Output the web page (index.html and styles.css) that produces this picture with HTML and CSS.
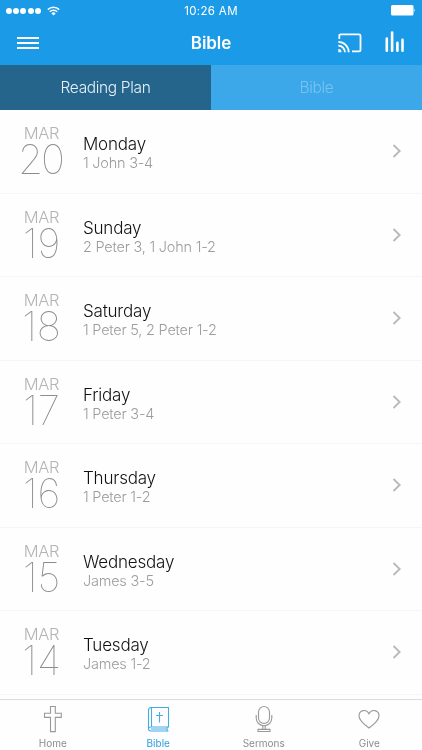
FILE: index.html
```html
<!DOCTYPE html>
<html lang="en">

<head>
  <meta charset="UTF-8">
  <meta name="viewport" content="width=device-width, initial-scale=1.0">
  <title>Bible</title>
  <link rel="stylesheet" href="styles.css">
</head>

<body>
  <div class="app">
    <header class="header">
      <div class="status">
        <div class="signal">
          <i></i><i></i><i></i><i></i><i></i>
          <svg class="wifi" width="13" height="10" viewBox="0 0 13 10">
            <path d="M.8 3.6a8.2 8.2 0 0 1 11.4 0M2.8 5.7a5.3 5.3 0 0 1 7.4 0" fill="none" stroke="#fff" stroke-width="1.5" />
            <path d="M4.4 7.4a3 3 0 0 1 4.2 0L6.5 9.6z" fill="#fff" />
          </svg>
        </div>
        <div class="time">10:26 AM</div>
        <svg class="battery" width="25" height="11" viewBox="0 0 25 11">
          <rect width="22.5" height="10.5" rx="1.5" fill="#fff" />
          <path d="M23.2 3.5q1.5 1.7 0 3.5z" fill="#fff" />
        </svg>
      </div>
      <div class="nav">
        <div class="menu"><span></span><span></span><span></span></div>
        <h1>Bible</h1>
        <div class="actions">
          <svg width="24" height="20" viewBox="0 0 24 20" fill="none" stroke="#fff" stroke-width="1.8">
            <path d="M1.3 6V2.8Q1.3 1.3 2.8 1.3H21Q22.5 1.3 22.5 2.8V16.9Q22.5 18.4 21 18.4H14" />
            <path d="M.3 8.9A10.4 10.4 0 0 1 10.7 19.3M.3 12.6A6.7 6.7 0 0 1 7 19.3" />
            <path d="M.3 16.1A3.2 3.2 0 0 1 3.5 19.3H.3z" fill="#fff" stroke="none" />
          </svg>
          <svg class="bars" width="20" height="22" viewBox="0 0 20 22" fill="none" stroke="#fff" stroke-width="2.6" stroke-linecap="round">
            <path d="M1.8 7.5v12.3M7.1 1.5v18.3M12.4 11.7v8.1M17.5 8.9v10.9" />
          </svg>
        </div>
      </div>
    </header>

    <div class="tabs">
      <div class="tab active">Reading Plan</div>
      <div class="tab">Bible</div>
    </div>

    <ul class="list">
      <li class="item">
        <div class="date"><span class="month">MAR</span><span class="num twenty">20</span></div>
        <div class="text"><h2>Monday</h2><p>1 John 3-4</p></div>
        <svg class="arrow" width="10" height="14" viewBox="0 0 10 14"><path d="M1.5 1l6.2 6-6.2 6" /></svg>
      </li>
      <li class="item">
        <div class="date"><span class="month">MAR</span><span class="num">19</span></div>
        <div class="text"><h2>Sunday</h2><p>2 Peter 3, 1 John 1-2</p></div>
        <svg class="arrow" width="10" height="14" viewBox="0 0 10 14"><path d="M1.5 1l6.2 6-6.2 6" /></svg>
      </li>
      <li class="item">
        <div class="date"><span class="month">MAR</span><span class="num">18</span></div>
        <div class="text"><h2>Saturday</h2><p>1 Peter 5, 2 Peter 1-2</p></div>
        <svg class="arrow" width="10" height="14" viewBox="0 0 10 14"><path d="M1.5 1l6.2 6-6.2 6" /></svg>
      </li>
      <li class="item">
        <div class="date"><span class="month">MAR</span><span class="num">17</span></div>
        <div class="text"><h2>Friday</h2><p>1 Peter 3-4</p></div>
        <svg class="arrow" width="10" height="14" viewBox="0 0 10 14"><path d="M1.5 1l6.2 6-6.2 6" /></svg>
      </li>
      <li class="item">
        <div class="date"><span class="month">MAR</span><span class="num">16</span></div>
        <div class="text"><h2>Thursday</h2><p>1 Peter 1-2</p></div>
        <svg class="arrow" width="10" height="14" viewBox="0 0 10 14"><path d="M1.5 1l6.2 6-6.2 6" /></svg>
      </li>
      <li class="item">
        <div class="date"><span class="month">MAR</span><span class="num">15</span></div>
        <div class="text"><h2>Wednesday</h2><p>James 3-5</p></div>
        <svg class="arrow" width="10" height="14" viewBox="0 0 10 14"><path d="M1.5 1l6.2 6-6.2 6" /></svg>
      </li>
      <li class="item">
        <div class="date"><span class="month">MAR</span><span class="num">14</span></div>
        <div class="text"><h2>Tuesday</h2><p>James 1-2</p></div>
        <svg class="arrow" width="10" height="14" viewBox="0 0 10 14"><path d="M1.5 1l6.2 6-6.2 6" /></svg>
      </li>
    </ul>

    <nav class="tabbar">
      <a class="tabbar-item">
        <svg width="24" height="28" viewBox="0 0 24 28">
          <path d="M9.5 1.5h4.8v6.7h6v4.2h-6v14.2H9.500V12.400h-6V8.200h6z" />
        </svg>
        <span>Home</span>
      </a>
      <a class="tabbar-item active">
        <svg width="24" height="28" viewBox="0 0 24 28">
          <path d="M22.500 2.500H5Q2.500 2.500 2.500 5.500v18Q2.500 26 4.800 26H22.500M22.500 2v20H5Q2.500 22 2.500 24M5.500 2.500V22M21.500 22q-1.200 2 0 4M5 24h15.500" />
          <path d="M13.500 7v10.400M10 10.500h7" />
        </svg>
        <span>Bible</span>
      </a>
      <a class="tabbar-item">
        <svg width="24" height="28" viewBox="0 0 24 28">
          <rect x="6.500" y="1.500" width="11" height="17" rx="5.500" />
          <path d="M4.200 10v3a7.800 7.800 0 0 0 15.600 0v-3M10.800 20.800v3.500M13.200 20.800v3.500M6 24.400h12v2.100H6z" />
        </svg>
        <span>Sermons</span>
      </a>
      <a class="tabbar-item">
        <svg width="24" height="28" viewBox="0 0 24 28">
          <path d="M12 23C8.500 20.500 2 15.800 2 10.800C2 5 9.500 3.500 12 8.700C14.500 3.500 22 5 22 10.800C22 15.800 15.500 20.500 12 23z" />
        </svg>
        <span>Give</span>
      </a>
    </nav>
  </div>
</body>

</html>
```

FILE: styles.css
```css
* {
  padding: 0;
  margin: 0;
  box-sizing: border-box;
}

body {
  font-family: Inter, "Liberation Sans", sans-serif;
  background: #fefefe;
}

.app {
  width: 422px;
  height: 750px;
  overflow: hidden;
  display: flex;
  flex-direction: column;
  will-change: transform;
}

.header {
  height: 65px;
  background: #1b9be7;
  color: #fff;
  flex: none;
}

.status {
  height: 21px;
  display: grid;
  grid-template-columns: 1fr auto 1fr;
  align-items: center;
  padding: 0 6px;
}

.signal {
  display: flex;
  align-items: center;
  gap: 1.2px;
}

.signal i {
  width: 6px;
  height: 6px;
  border-radius: 50%;
  background: #fff;
}

.wifi {
  margin-left: 5px;
}

.time {
  font-size: 11.5px;
  letter-spacing: .35px;
}

.battery {
  justify-self: end;
}

.nav {
  height: 44px;
  display: grid;
  grid-template-columns: 1fr auto 1fr;
  align-items: center;
  padding: 0 17px;
}

.menu {
  width: 22px;
  display: flex;
  flex-direction: column;
  gap: 3px;
}

.menu span {
  height: 2px;
  background: #fff;
}

.nav h1 {
  font-size: 17px;
  font-weight: 600;
  letter-spacing: -.1px;
}

.actions {
  display: flex;
  justify-content: flex-end;
  align-items: center;
  gap: 23px;
}

.bars {
  margin-top: -2px;
}

.tabs {
  height: 45px;
  display: flex;
  flex: none;
}

.tab {
  flex: 1;
  text-align: center;
  line-height: 46px;
  font-size: 15.5px;
  font-weight: 300;
  letter-spacing: -.35px;
  background: #3ca8e9;
  color: #79c3f1;
}

.tab.active {
  background: #25658c;
  color: #e4f1f9;
}

.list {
  list-style: none;
  flex: 1;
  overflow: hidden;
}

.item {
  height: 83.5px;
  display: flex;
  align-items: center;
  border-bottom: 1px solid #f6f6f6;
  padding-right: 20px;
}

.date {
  width: 83px;
  display: flex;
  flex-direction: column;
  align-items: center;
}

.month {
  font-size: 16.5px;
  line-height: 20px;
  font-weight: 300;
  letter-spacing: -.3px;
  color: #b4b4b4;
}

.num {
  font-size: 40.5px;
  line-height: 34px;
  margin-bottom: 2px;
  font-weight: 100;
  color: #8c8c8c;
}

.num.twenty {
  letter-spacing: -2px;
  margin-left: -2px;
}

.text {
  flex: 1;
  padding-top: 4px;
}

.text h2 {
  font-size: 17px;
  line-height: 20px;
  font-weight: 300;
  letter-spacing: -.2px;
  color: #111;
}

.text p {
  font-size: 14.5px;
  line-height: 18px;
  font-weight: 300;
  letter-spacing: -.22px;
  color: #9c9c9c;
}

.arrow path {
  fill: none;
  stroke: #b8b8b8;
  stroke-width: 1.8;
}

.tabbar {
  height: 51px;
  flex: none;
  display: flex;
  border-top: 1px solid #dcdcdc;
}

.tabbar-item {
  flex: 1;
  display: flex;
  flex-direction: column;
  align-items: center;
  padding-top: 5px;
  font-size: 10px;
  color: #8c8c8c;
}

.tabbar-item svg {
  fill: none;
  stroke: #999;
  stroke-width: 1.1;
}

.tabbar-item span {
  line-height: 12px;
  margin-top: 4px;
}

.tabbar-item.active {
  color: #2b9fe0;
}

.tabbar-item.active svg {
  stroke: #45aae6;
}
```
